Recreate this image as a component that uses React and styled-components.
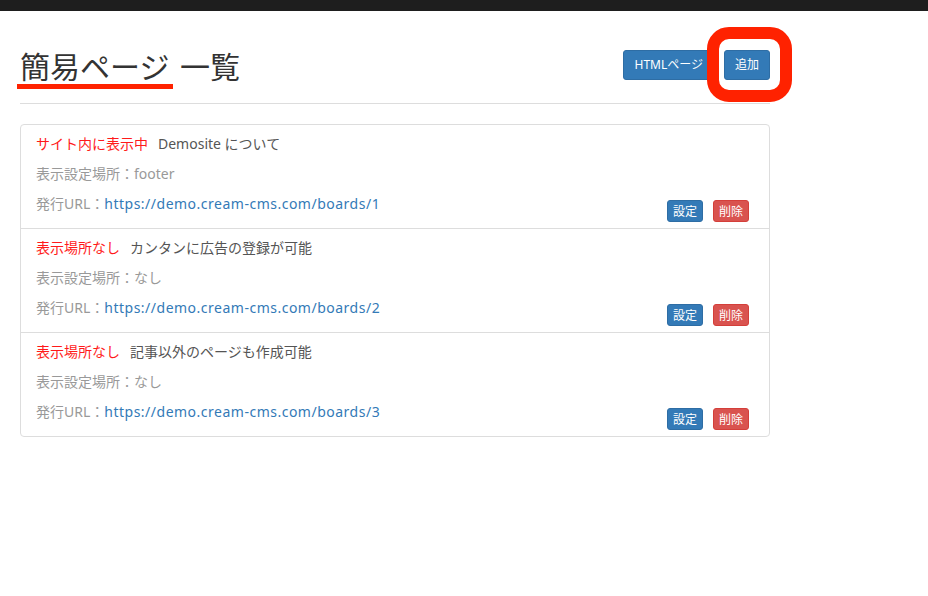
import React from 'react';
import styled, { createGlobalStyle } from 'styled-components';

const GlobalStyle = createGlobalStyle`
  body {
    margin: 0;
    background: #fff;
    font-family: 'Noto Sans', 'Noto Sans CJK JP', sans-serif;
    color: #333;
  }
`;

const boards = [
  { id: 1, status: 'サイト内に表示中', title: 'Demosite について', place: 'footer' },
  { id: 2, status: '表示場所なし', title: 'カンタンに広告の登録が可能', place: 'なし' },
  { id: 3, status: '表示場所なし', title: '記事以外のページも作成可能', place: 'なし' },
];

export default function App() {
  return (
    <>
      <GlobalStyle />
      <TopBar />
      <Page>
        <Header>
          <Title>
            簡易ページ 一覧
            <Underline />
          </Title>
          <Actions>
            <Button>HTMLページ</Button>
            <Highlight>
              <Button>追加</Button>
            </Highlight>
          </Actions>
        </Header>
        <List>
          {boards.map((b) => (
            <Item key={b.id}>
              <Line>
                <Status>{b.status}</Status>
                <ItemTitle>{b.title}</ItemTitle>
              </Line>
              <Line>
                <Muted>表示設定場所：{b.place}</Muted>
              </Line>
              <LastLine>
                <Muted>
                  発行URL：<UrlLink href="#">https://demo.cream-cms.com/boards/{b.id}</UrlLink>
                </Muted>
                <SmallButtons>
                  <SmallButton>設定</SmallButton>
                  <SmallButton $danger>削除</SmallButton>
                </SmallButtons>
              </LastLine>
            </Item>
          ))}
        </List>
      </Page>
    </>
  );
}

const TopBar = styled.div`
  height: 11px;
  background: #1e1e1e;
`;

const Page = styled.div`
  width: 750px;
  padding: 0 20px;
`;

const Header = styled.div`
  display: flex;
  justify-content: space-between;
  align-items: center;
  height: 30px;
  padding: 39px 0 23px;
  border-bottom: 1px solid #ddd;
`;

const Title = styled.h1`
  position: relative;
  margin: 0;
  font-family: 'Noto Sans CJK JP', sans-serif;
  font-size: 30px;
  font-weight: 400;
  line-height: 30px;
  word-spacing: 4px;
  color: #333;
`;

const Underline = styled.span`
  position: absolute;
  left: -3px;
  top: 34px;
  width: 156px;
  height: 5px;
  background: #ff2200;
`;

const Actions = styled.div`
  display: flex;
  gap: 10px;
`;

const Button = styled.button`
  position: relative;
  z-index: 1;
  height: 30px;
  padding: 5px 10px;
  border: 1px solid #2e6da4;
  border-radius: 3px;
  background: #337ab7;
  color: #fff;
  font-family: 'Noto Sans', 'Noto Sans CJK JP', sans-serif;
  font-size: 12px;
  line-height: 18px;
  white-space: nowrap;
`;

const Highlight = styled.span`
  position: relative;
  display: inline-flex;

  &::before {
    content: '';
    position: absolute;
    left: -17px;
    right: -22px;
    top: -23px;
    bottom: -22px;
    border: 12px solid #ff2200;
    border-radius: 22px;
    background: #fff;
    z-index: 1;
  }
`;

const List = styled.div`
  margin-top: 20px;
  border: 1px solid #ddd;
  border-radius: 4px;
`;

const Item = styled.div`
  display: flex;
  flex-direction: column;
  gap: 10px;
  padding: 9px 20px 6px 15px;
  font-size: 14px;
  line-height: 20px;

  & + & {
    border-top: 1px solid #ddd;
  }
`;

const Line = styled.div`
  display: flex;
  gap: 10px;
  height: 20px;
`;

const LastLine = styled.div`
  display: flex;
  justify-content: space-between;
  align-items: flex-start;
  height: 28px;
`;

const Status = styled.span`
  color: #ff1a1a;
`;

const ItemTitle = styled.span`
  color: #555;
`;

const Muted = styled.span`
  color: #999;
  height: 20px;
`;

const UrlLink = styled.a`
  color: #337ab7;
  text-decoration: none;
  letter-spacing: 0.5px;
`;

const SmallButtons = styled.div`
  display: flex;
  gap: 10px;
  margin-top: 6px;
`;

const SmallButton = styled.button`
  height: 22px;
  padding: 1px 5px;
  border: 1px solid ${(p) => (p.$danger ? '#d43f3a' : '#2e6da4')};
  border-radius: 3px;
  background: ${(p) => (p.$danger ? '#d9534f' : '#337ab7')};
  color: #fff;
  font-family: 'Noto Sans CJK JP', sans-serif;
  font-size: 12px;
  line-height: 18px;
`;
